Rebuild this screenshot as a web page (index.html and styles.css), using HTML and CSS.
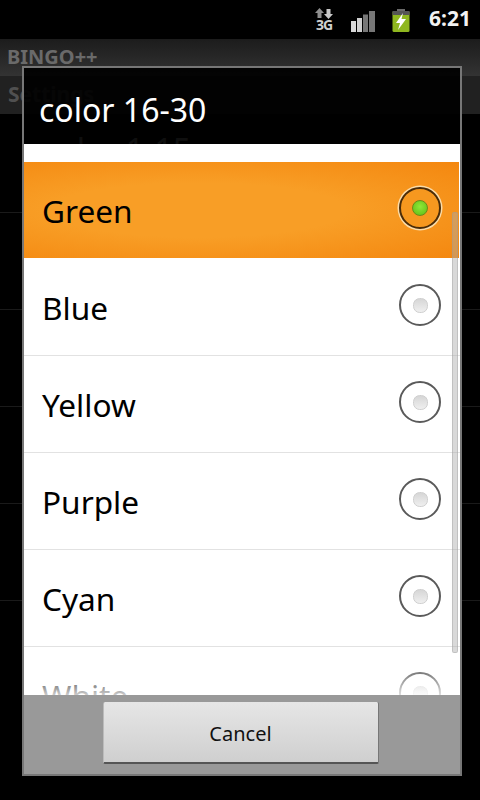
FILE: index.html
```html
<!DOCTYPE html>
<html lang="en">
<head>
  <meta charset="UTF-8">
  <title>BINGO++</title>
  <link rel="stylesheet" href="styles.css">
</head>
<body>

<div class="status-bar">
  <div class="icon-3g">
    <svg width="18" height="11" viewBox="0 0 18 11">
      <path d="M4.500 0l4.500 5H6.500v5h-4V5H0z" fill="#8f8f8f"/>
      <path d="M11.500 1h4v5H18l-4.500 5L9 6h2.500z" fill="#c8c8c8"/>
    </svg>
    <span class="icon-3g-text">3G</span>
  </div>
  <svg class="icon-signal" width="24" height="21" viewBox="0 0 24 21">
    <rect x="0" y="10" width="5" height="11" fill="#d8d8d8"/>
    <rect x="6" y="7" width="5" height="14" fill="#d0d0d0"/>
    <rect x="12" y="3.500" width="5" height="17.500" fill="#777"/>
    <rect x="18" y="0" width="6" height="21" fill="#777"/>
  </svg>
  <svg class="icon-battery" width="18" height="23" viewBox="0 0 18 23">
    <rect x="5" y="0" width="8" height="3" fill="#6a6a6a"/>
    <rect x="0.500" y="2" width="17" height="21" rx="1.500" fill="#8fb71f"/>
    <rect x="0.500" y="2" width="17" height="4" fill="#555"/>
    <path d="M11 4L4 14h4l-2 7 8-11h-4.500z" fill="#fff"/>
  </svg>
  <span class="clock">6:21</span>
</div>

<div class="app-title">BINGO++</div>
<div class="section-title">Settings</div>
<div class="bg-row bg-row-first">color 1-15</div>
<div class="bg-row"></div>
<div class="bg-row"></div>
<div class="bg-row"></div>
<div class="bg-row"></div>

<div class="dialog">
  <div class="dialog-title">color 16-30</div>
  <div class="dialog-list">
    <div class="item item-selected">
      <span>Green</span>
      <span class="radio radio-on"><span class="dot"></span></span>
    </div>
    <div class="item">
      <span>Blue</span>
      <span class="radio"><span class="dot"></span></span>
    </div>
    <div class="item">
      <span>Yellow</span>
      <span class="radio"><span class="dot"></span></span>
    </div>
    <div class="item">
      <span>Purple</span>
      <span class="radio"><span class="dot"></span></span>
    </div>
    <div class="item">
      <span>Cyan</span>
      <span class="radio"><span class="dot"></span></span>
    </div>
    <div class="item">
      <span>White</span>
      <span class="radio"><span class="dot"></span></span>
    </div>
    <div class="scrollbar"></div>
    <div class="fade"></div>
  </div>
  <div class="dialog-buttons">
    <div class="button">Cancel</div>
  </div>
</div>

</body>
</html>
```

FILE: styles.css
```css
body {
  margin: 0;
  width: 480px;
  height: 800px;
  background: #000;
  font-family: "Noto Sans", "Open Sans", sans-serif;
  overflow: hidden;
  position: relative;
}

.status-bar {
  height: 39px;
  box-sizing: border-box;
  padding: 0 9px 0 0;
  background: #000;
  display: flex;
  align-items: center;
  justify-content: flex-end;
}

.icon-3g {
  width: 18px;
  margin-right: 18px;
  display: flex;
  flex-direction: column;
  align-items: center;
}

.icon-3g svg {
  display: block;
}

.icon-3g-text {
  color: #d0d0d0;
  font-size: 14px;
  font-weight: 700;
  letter-spacing: -1px;
  line-height: 12px;
}

.icon-signal {
  margin-right: 17px;
  margin-top: 4px;
}

.icon-battery {
  margin-right: 19px;
  margin-top: 2px;
}

.clock {
  color: #f2f2f2;
  font-size: 21px;
  font-weight: 700;
  line-height: 24px;
  margin-bottom: 3px;
}

.app-title {
  height: 37px;
  box-sizing: border-box;
  padding: 6px 0 0 7px;
  background: linear-gradient(to bottom, #1c1c1c, #333);
  color: #6a6a6a;
  font-size: 20px;
  font-weight: 700;
  line-height: 24px;
}

.section-title {
  height: 38px;
  box-sizing: border-box;
  padding: 4px 0 0 8px;
  background: #212121;
  color: #505050;
  font-size: 21px;
  font-weight: 700;
  line-height: 28px;
}

.bg-row {
  height: 96px;
  border-bottom: 1px solid #1a1a1a;
  color: #c0c0c0;
  font-size: 32px;
  padding-left: 42px;
}

.bg-row-first {
  height: 98px;
  line-height: 72px;
}

.dialog {
  position: absolute;
  left: 22px;
  top: 66px;
  width: 440px;
  height: 710px;
  box-sizing: border-box;
  border: 2px solid #777;
  display: flex;
  flex-direction: column;
}

.dialog-title {
  height: 76px;
  flex-shrink: 0;
  box-sizing: border-box;
  padding: 20px 0 0 15px;
  background: rgba(0, 0, 0, 0.92);
  color: #fff;
  font-size: 32px;
  line-height: 44px;
}

.dialog-list {
  flex: 1;
  position: relative;
  overflow: hidden;
  background: #fff;
  padding-top: 18px;
}

.item {
  height: 96px;
  border-bottom: 1px solid #e2e2e2;
  padding: 0 19px 0 18px;
  display: flex;
  align-items: center;
  justify-content: space-between;
  color: #000;
  font-size: 31.600px;
}

.item-selected {
  background: radial-gradient(ellipse at 40% 50%, #f89e26 40%, #f4870f 100%);
  border-bottom-color: #fff;
  margin-right: 1px;
  padding-right: 18px;
}

.radio {
  width: 38px;
  height: 38px;
  border: 2px solid #5a5a5a;
  border-radius: 50%;
  background: #fff;
  display: flex;
  align-items: center;
  justify-content: center;
  position: relative;
  top: -2px;
}

.dot {
  width: 13px;
  height: 13px;
  border-radius: 45%;
  background: linear-gradient(to bottom, #d6d6d6, #efefef);
  border: 1px solid #cfcfcf;
}

.radio-on {
  background: #f6981f;
  border-color: #4a2c08;
  box-shadow: 0 0 0 1.500px #fbdca8;
}

.radio-on .dot {
  width: 14px;
  height: 14px;
  border-radius: 50%;
  background: radial-gradient(circle at 50% 40%, #8fe838, #5cbc14);
  border-color: #6a8a1a;
}

.scrollbar {
  position: absolute;
  right: 2px;
  top: 68px;
  width: 6px;
  height: 441px;
  border-radius: 2px;
  background: rgba(170, 170, 170, 0.45);
  border: 1px solid rgba(150, 150, 150, 0.35);
  box-sizing: border-box;
}

.fade {
  position: absolute;
  left: 0;
  right: 0;
  bottom: 0;
  height: 30px;
  background: linear-gradient(to bottom, rgba(255, 255, 255, 0), rgba(255, 255, 255, 0.8));
}

.dialog-buttons {
  height: 79px;
  flex-shrink: 0;
  background: #999;
  display: flex;
  justify-content: center;
  padding: 7px 3px 0 0;
  box-sizing: border-box;
}

.button {
  width: 276px;
  height: 62px;
  box-sizing: border-box;
  border-radius: 2px;
  background: linear-gradient(to bottom, #e6e6e6, #cfcfcf);
  border-bottom: 2px solid #555;
  border-right: 1px solid #777;
  border-left: 1px solid #bbb;
  color: #111;
  font-size: 20px;
  text-align: center;
  line-height: 64px;
}
```
